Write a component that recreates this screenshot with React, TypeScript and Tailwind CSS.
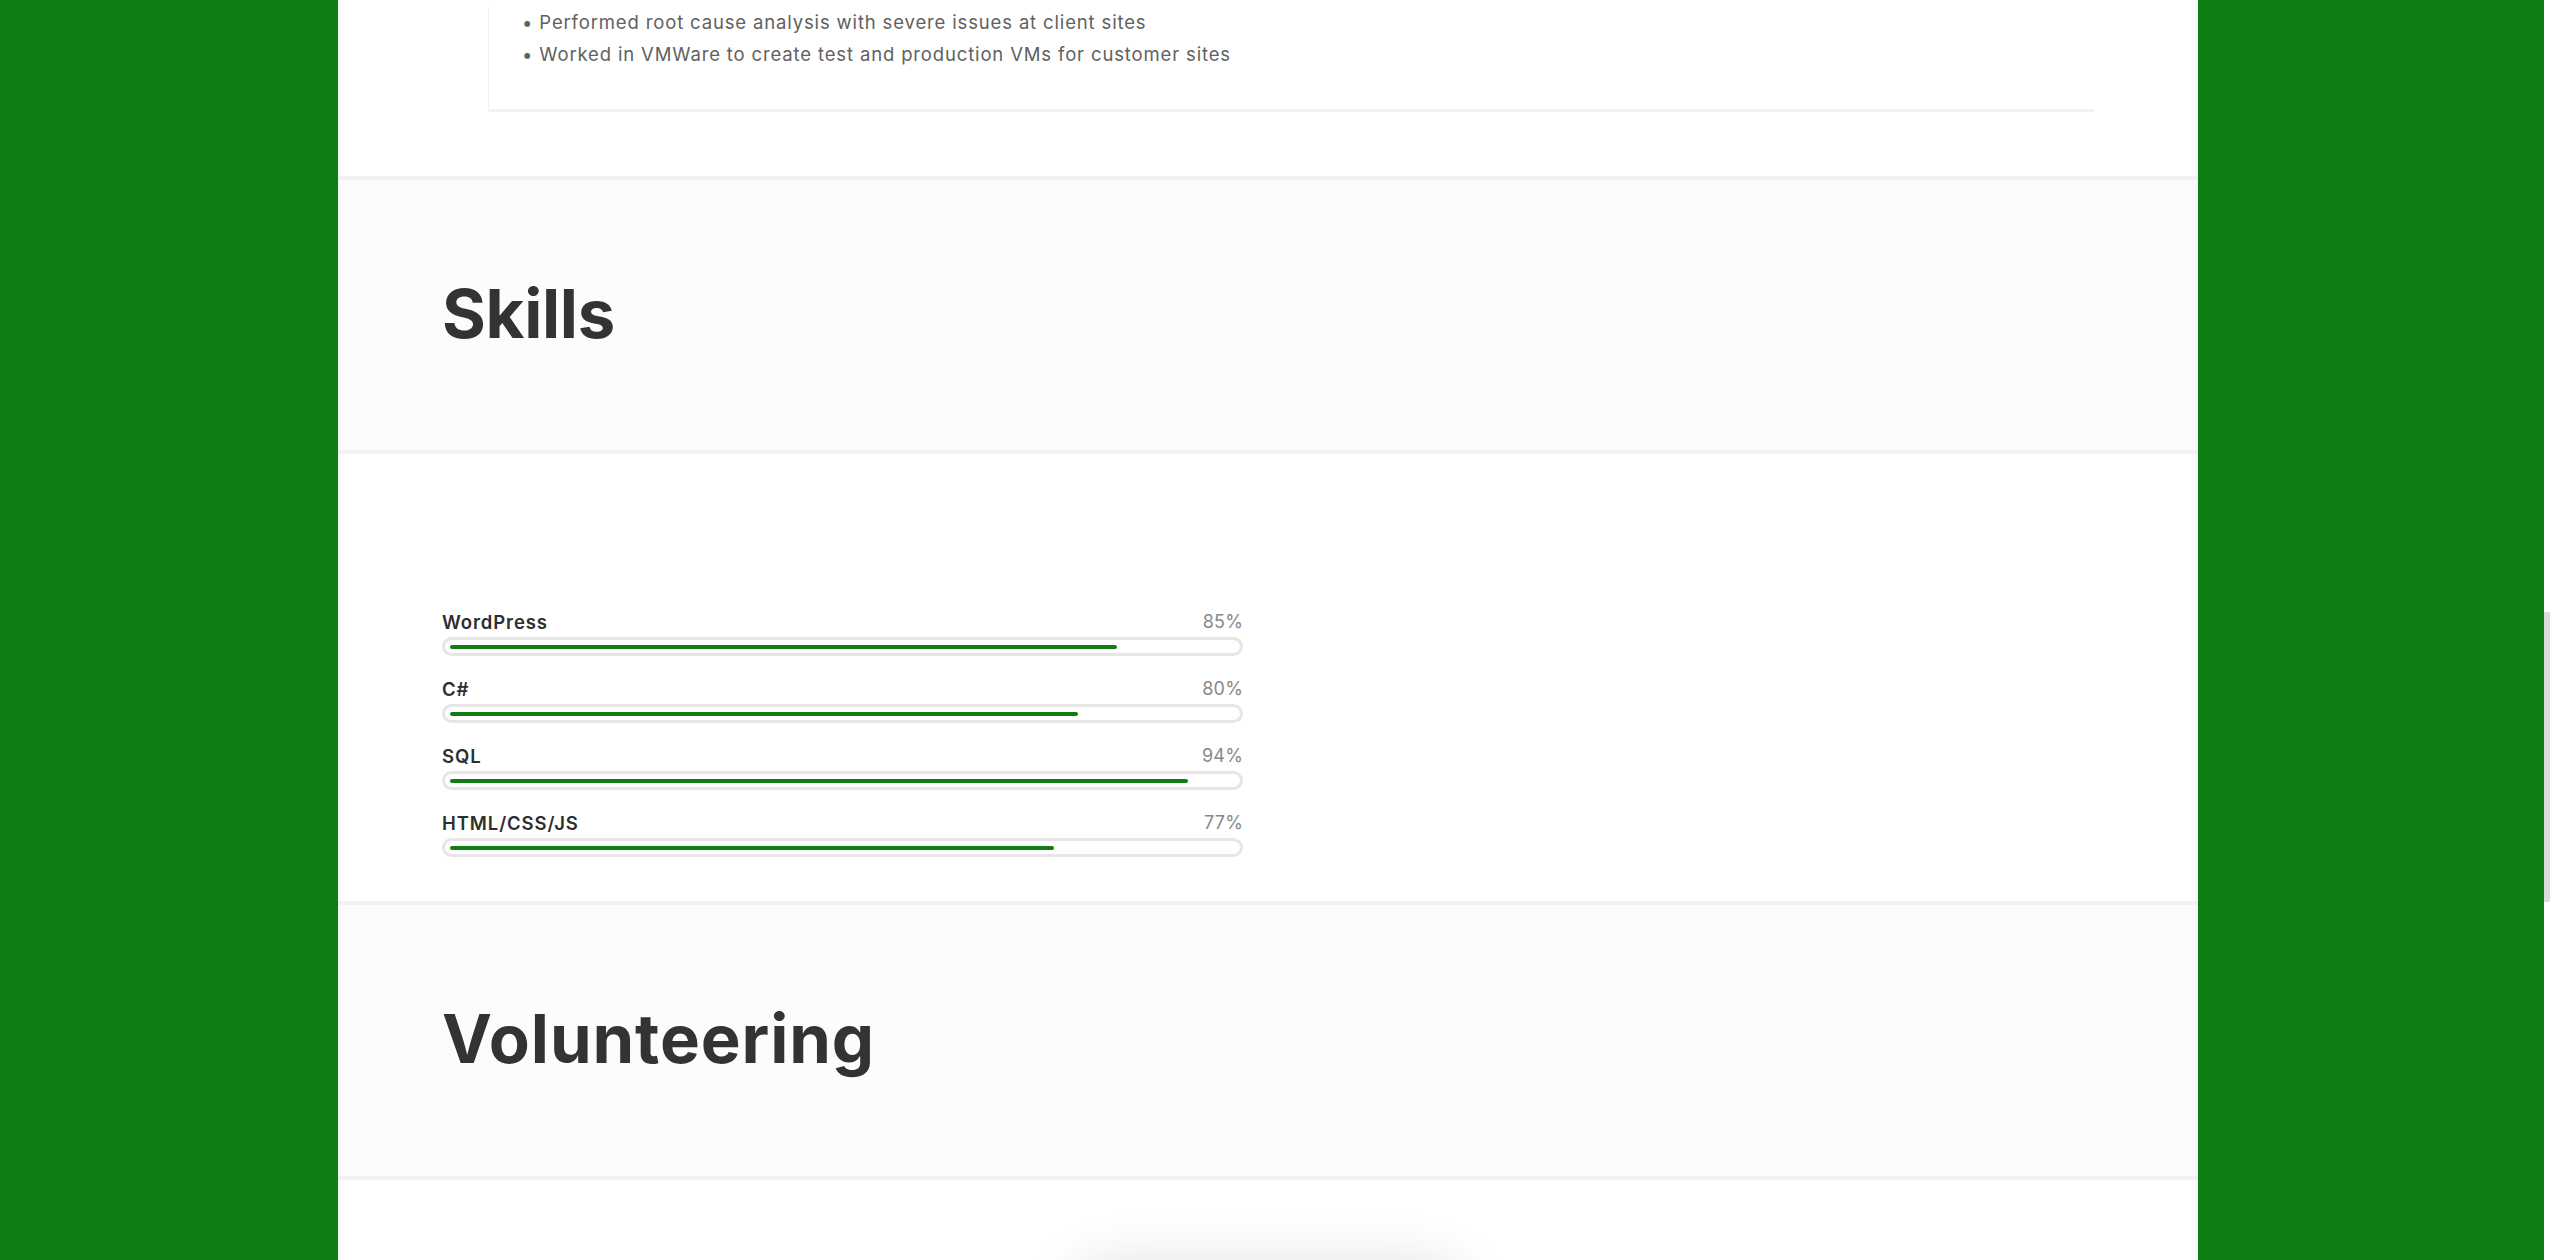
import React from "react";

const skills = [
  { name: "WordPress", value: 85 },
  { name: "C#", value: 80 },
  { name: "SQL", value: 94 },
  { name: "HTML/CSS/JS", value: 77 },
];

function Divider() {
  return <div className="h-[4px] shrink-0 bg-[#f1f1f1]" />;
}

export default function App() {
  return (
    <div
      className="flex h-[1260px] w-[2550px] overflow-hidden bg-[#0f7d12]"
      style={{ fontFamily: "Inter, 'Noto Sans', sans-serif" }}
    >
      <div className="w-[338px] shrink-0 bg-[#0f7d12]" />
      <main className="flex w-[1860px] shrink-0 flex-col overflow-hidden bg-white">
        {/* Experience tail */}
        <section className="h-[176px] shrink-0 px-[104px] pt-[6px]">
          <div className="ml-[46px] h-[106px] border-b-[3px] border-l border-[#f2f2f4] pl-[33px] text-[18.5px] leading-[32px] text-[#616161]">
            <p className="h-[32px] tracking-[0.85px]">• Performed root cause analysis with severe issues at client sites</p>
            <p className="h-[32px] tracking-[0.85px]">• Worked in VMWare to create test and production VMs for customer sites</p>
          </div>
        </section>
        <Divider />
        {/* Skills heading */}
        <section className="flex h-[270px] shrink-0 items-center bg-[#fcfcfc] px-[104px] pb-[4px]">
          <h2 className="text-[67px] font-bold leading-none tracking-[-0.3px] text-[#333]">Skills</h2>
        </section>
        <Divider />
        {/* Skills bars */}
        <section className="h-[447px] shrink-0 px-[104px] pt-[156px]">
          <div className="flex w-[801px] flex-col gap-[21px]">
            {skills.map((s) => (
              <div key={s.name} className="flex flex-col">
                <div className="flex h-[24px] items-center justify-between leading-[24px]">
                  <span className="text-[18.5px] font-semibold tracking-[0.9px] text-[#2e2e2e]">{s.name}</span>
                  <span className="text-[18px] tracking-[0.2px] text-[#888]">{s.value}%</span>
                </div>
                <div className="mt-[3px] flex h-[19px] items-center rounded-full border-[3px] border-[#e6e6e6] bg-white px-[5px]">
                  <div className="h-[4px] w-full">
                    <div
                      className="h-full rounded-full bg-[#0f7d12]"
                      style={{ width: `${s.value}%` }}
                    />
                  </div>
                </div>
              </div>
            ))}
          </div>
        </section>
        <Divider />
        {/* Volunteering heading */}
        <section className="flex h-[271px] shrink-0 items-center bg-[#fcfcfc] px-[104px] pb-[4px]">
          <h2 className="text-[67px] font-bold leading-none tracking-[0.9px] text-[#333]">Volunteering</h2>
        </section>
        <Divider />
        {/* Next content peeking */}
        <section className="flex shrink-0 justify-center pt-[88px]">
          <div className="h-[300px] w-[380px] shrink-0 rounded-[24px] bg-white shadow-[0_0_60px_rgba(0,0,0,0.14)]" />
        </section>
      </main>
      <div className="flex-1 bg-[#0f7d12]" />
      <div className="w-[6px] shrink-0 bg-white pt-[612px]">
        <div className="h-[290px] w-full bg-[#dcdcdc]" />
      </div>
    </div>
  );
}
